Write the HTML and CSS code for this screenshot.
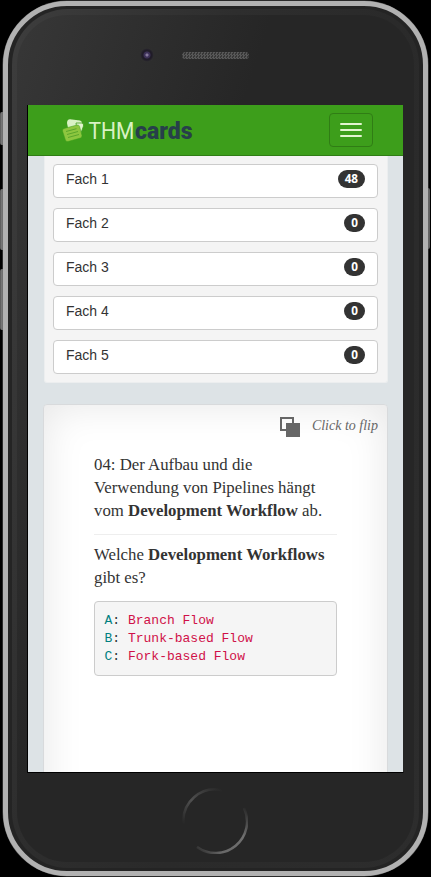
FILE: index.html
```html
<!DOCTYPE html>
<html lang="de">
<head>
<meta charset="utf-8">
<title>THMcards</title>
<link rel="stylesheet" href="styles.css">
</head>
<body>
<div class="device">
  <i class="key mute"></i><i class="key up"></i><i class="key down"></i><i class="key power"></i>
  <div class="frame"><div class="bezel"><div class="face">
    <div class="top">
      <span class="camera"></span>
      <span class="speaker"></span>
    </div>
    <main class="screen">
      <nav class="navbar">
        <svg class="logo" width="132" height="28" viewBox="0 0 132 28">
          <g transform="translate(0 3)">
            <path d="M5 4Q5 .5 8 .3L18 1.500Q20 2 20 4L19 8L6 9Z" fill="#d9f2c4"/>
            <path d="M14 4L20 4Q22 4.500 21.500 7L19 14L15 12Z" fill="#e3f5d0" stroke="#3d9e1b" stroke-width=".8"/>
            <path d="M2 9.500L15 6Q17 5.500 17.600 7.500L20 16.500Q20.300 18.300 18.500 19L6 22.500Q4 22.900 3.400 21L.5 12Q0 10 2 9.500Z" fill="#8dc63f" stroke="#3d9e1b" stroke-width=".5"/>
            <path d="M4 12.500L14.500 9.700M5 15.500L16 12.500M6 18.500L17 15.500" stroke="#5ba62b" stroke-width="1"/>
          </g>
          <text class="logo-thm" x="26.500" y="23" textLength="46" lengthAdjust="spacingAndGlyphs">THM</text>
          <text class="logo-cards" x="73" y="23" textLength="57.500" lengthAdjust="spacingAndGlyphs">cards</text>
        </svg>
        <button class="toggle" aria-label="Menu"><i></i><i></i><i></i></button>
      </nav>
      <ul class="boxes">
        <li>Fach 1<b>48</b></li>
        <li>Fach 2<b>0</b></li>
        <li>Fach 3<b>0</b></li>
        <li>Fach 4<b>0</b></li>
        <li>Fach 5<b>0</b></li>
      </ul>
      <article class="card">
        <header class="flip">
          <svg width="20" height="20" viewBox="0 0 20 20"><path d="M0 0H14V6H12V2H2V12H6V14H0Z" fill="#666"/><path d="M6 6H20V20H6Z" fill="#666"/></svg>
          <em>Click to flip</em>
        </header>
        <section class="content">
          <p>04: Der Aufbau und die Verwendung von Pipelines hängt vom <strong>Development Workflow</strong> ab.</p>
          <hr>
          <p>Welche <strong>Development Workflows</strong> gibt es?</p>
          <pre><span class="k">A</span>: <span class="s">Branch Flow</span>
<span class="k">B</span>: <span class="s">Trunk-based Flow</span>
<span class="k">C</span>: <span class="s">Fork-based Flow</span></pre>
        </section>
      </article>
    </main>
    <svg class="home" width="66" height="66" viewBox="0 0 66 66" fill="none" stroke-width="2.500">
      <defs>
        <linearGradient id="a" x1="0" y1="1" x2="1" y2="0"><stop offset="0" stop-color="#262626"/><stop offset=".45" stop-color="#505050"/><stop offset="1" stop-color="#262626"/></linearGradient>
        <linearGradient id="b" x1="0" y1="1" x2="1" y2="0"><stop offset="0" stop-color="#262626"/><stop offset=".25" stop-color="#686868"/><stop offset=".65" stop-color="#707070"/><stop offset="1" stop-color="#262626"/></linearGradient>
      </defs>
      <path d="M1.500 36A31.500 31.500 0 0 1 40 2.300" stroke="url(#a)"/>
      <path d="M62 20A31.500 31.500 0 0 1 15 59" stroke="url(#b)"/>
    </svg>
  </div></div></div>
</div>
</body>
</html>
```
FILE: styles.css
```css
* { box-sizing: border-box; }
body { margin: 0; background: #000; overflow: hidden; }
.device { position: relative; width: 431px; height: 877px; padding: 1px 3px; }
.key { position: absolute; left: 0; width: 5px; border-radius: 2px; background: linear-gradient(90deg, #555, #969696 60%); }
.mute { top: 112px; height: 33px; }
.up { top: 189px; height: 61px; }
.down { top: 269px; height: 61px; }
.power { top: 188px; height: 61px; left: auto; right: 1px; transform: scaleX(-1); }
.frame { position: relative; height: 875px; border: 5px solid #b1b1b1; border-radius: 64px; background: #242424; padding: 3px 4px; box-shadow: 0 0 0 .5px #555; }
.bezel { height: 859px; border-radius: 56px; padding: 6px 5px; background: linear-gradient(105deg, #3d3d3d, #2e2e2e 35%, #2a2a2a 60%, #2d2d2d); }
.face { height: 847px; border-radius: 50px; padding: 0 10px; display: flex; flex-direction: column; align-items: center; background: linear-gradient(108deg, #373737, #262626 38%); }
.top { height: 90px; flex: none; align-self: stretch; display: flex; align-items: center; padding: 0 0 10px 113px; }
.camera { width: 14px; height: 14px; border-radius: 50%; background: radial-gradient(circle, #85799c 0 1px, #3d3158 2px 3px, #201c28 4px 5px, #303030 7px); }
.speaker { width: 67px; height: 7px; margin-left: 28px; border-radius: 4px; background: repeating-conic-gradient(#585858 0 25%, #383838 0 50%) 0 0 / 3px 3px; }
.screen { width: 377px; height: 668px; flex: none; border: solid #000; border-width: 0 1px 1px; border-right-color: #262626; background: #dde3e6; overflow: hidden; }
.navbar { height: 51px; background: #3d9e1b; border-bottom: 1px solid #307d15; display: flex; justify-content: space-between; align-items: center; padding: 0 30px 0 34px; }
.logo { display: block; }
.logo-thm { font: 400 24.5px Roboto, sans-serif; fill: #d9f2c4; }
.logo-cards { font: 900 24px Roboto, sans-serif; fill: #273f4a; }
.toggle { width: 44px; height: 34px; padding: 0; border: 1px solid #307d15; border-radius: 4px; background: none; display: flex; flex-direction: column; gap: 4px; align-items: center; justify-content: center; }
.toggle i { width: 22px; height: 2px; border-radius: 1px; background: #e3f5d0; }
.boxes { list-style: none; margin: 0 16px 0 15.5px; padding: 8px 8.5px; background: #f4f4f4; display: grid; gap: 10px; border: solid #eceeef; border-width: 0 1px 1px; border-radius: 0 0 3px 3px; width: 344px; height: 227px; }
.boxes li { height: 34px; display: flex; justify-content: space-between; border: 1px solid #ccc; border-radius: 4px; background: #fff; padding: 4px 12px; font: 14px/20px "Liberation Sans", sans-serif; color: #333; }
.boxes b { height: 18px; margin-top: 1px; border-radius: 10px; padding: 0 7px; background: #333; color: #fff; font: bold 11.7px/16px "Open Sans", sans-serif; }
.card { width: 345px; height: 500px; margin: 21px 15px 0; border: 1px solid #d8dadc; border-radius: 4px; background: #fff; box-shadow: inset 0 0 40px rgba(0,0,0,.1); font: 16.8px/23px "Liberation Serif", serif; color: #333; }
.flip { height: 48px; padding: 12px 9px 0 0; display: flex; justify-content: flex-end; gap: 12px; color: #666; }
.flip em { font-size: 14px; line-height: 17px; }
.content { padding: 0 50px; }
.content p { margin: 0; }
.content hr { border: 0; border-top: 1px solid #eee; margin: 12px 0 8px; }
.content pre { margin: 12px 0 0; height: 75px; padding: 10px 9.5px; border: 1px solid #ccc; border-radius: 4px; background: #f5f5f5; font: 13px/18px "Liberation Mono", monospace; }
.k { color: #008080; }
.s { color: #d01048; }
.home { flex: none; margin: 15px 2px 0 0; }
```
